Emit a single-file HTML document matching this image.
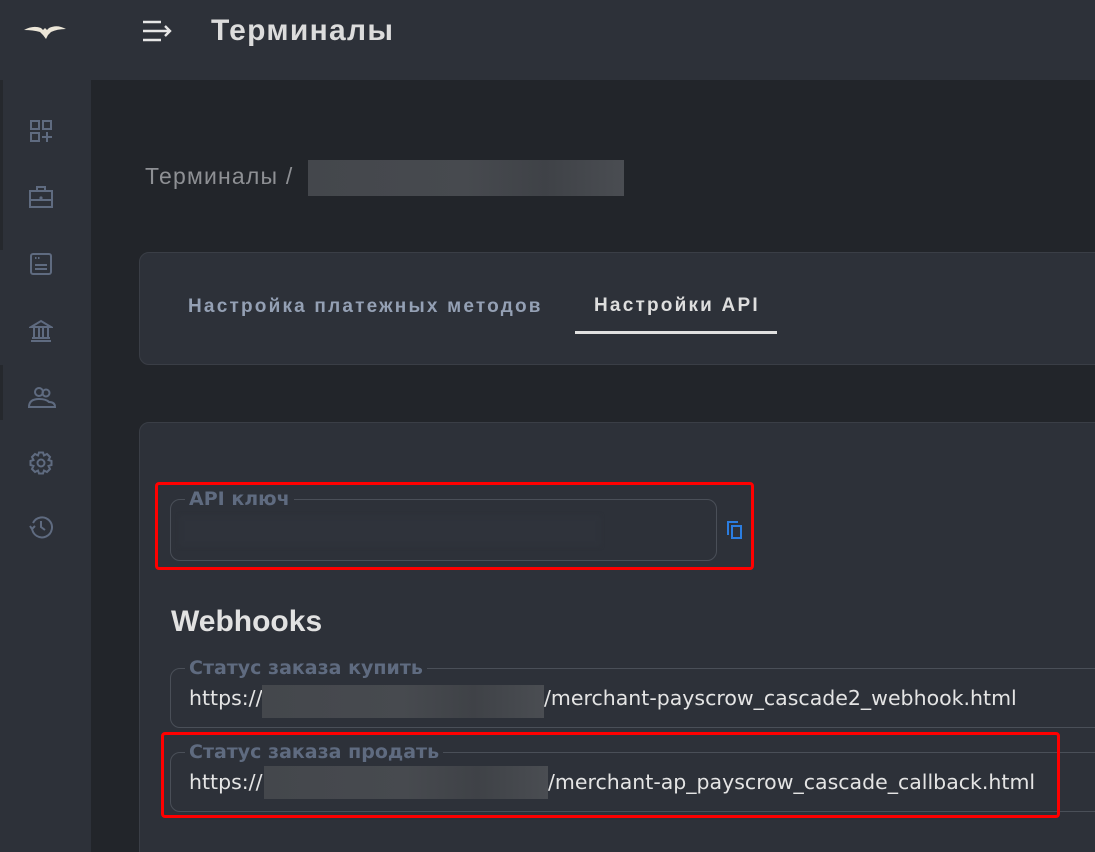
<!DOCTYPE html>
<html><head><meta charset="utf-8"><style>
*{box-sizing:border-box;margin:0;padding:0}
html,body{width:1095px;height:852px;overflow:hidden}
body{background:#22252a;font-family:"Liberation Sans",sans-serif;position:relative}
.hdr{position:absolute;left:0;top:0;width:1095px;height:80px;background:#2d3139}
.sb{position:absolute;left:0;top:80px;width:91px;height:772px;background:#2d3139}
.ttl{position:absolute;left:211px;top:14px;font-size:30px;letter-spacing:1.3px;font-weight:bold;color:#dcdcdc}
.ic{position:absolute;left:29px;width:24px;height:24px}
.bc{position:absolute;left:145px;top:163px;font-size:23px;letter-spacing:1.2px;color:#8e9094}
.blur{position:absolute;background:linear-gradient(90deg,#44474c,#474a4f 50%,#3f4247 75%,#4a4d52)}
.card{position:absolute;left:139px;width:1000px;background:#2d3139;border:1px solid #3a3e46;border-radius:10px}
.tab{position:absolute;font-size:19px;letter-spacing:2.2px;font-weight:bold}
fieldset{position:absolute;border:1px solid #4a4f58;border-radius:10px;padding:0 14px}
legend{color:#5f6b80;font-size:19px;font-weight:bold;padding:0 4px;margin-left:0;line-height:16px;font-family:"DejaVu Sans",sans-serif}
.url{position:absolute;font-family:"DejaVu Sans",sans-serif;font-size:20.5px;color:#e4e4e4}
.red{position:absolute;border:3px solid #ff0000;border-radius:4px}
</style></head><body>
<div class="hdr"></div>
<svg style="position:absolute;left:23px;top:22px" width="44" height="18" viewBox="0 0 44 18"><path d="M1 8 Q10 3 18 6 L20 8 L22 6 L24 8 L26 6 Q34 2 43 7 Q34 7 28 10 L25 13 L23 17 L20 13 L17 10 Q10 8 1 8Z" fill="#ece6d8"/></svg>
<svg style="position:absolute;left:143px;top:20px" width="30" height="22" viewBox="0 0 30 22" fill="none" stroke="#e6e6e6" stroke-width="2.4"><path d="M0 2H18M0 11H27M0 20H18M22 6L27 11L22 16"/></svg>
<div class="ttl">Терминалы</div>
<div class="sb"></div>
<div style="position:absolute;left:0;top:80px;width:3px;height:170px;background:#25282d"></div>
<div style="position:absolute;left:0;top:365px;width:3px;height:55px;background:#25282d"></div>
<svg class="ic" style="top:119px" viewBox="0 0 24 24" fill="none" stroke="#5f6b80" stroke-width="2"><rect x="2" y="2" width="8" height="8"/><rect x="14" y="2" width="8" height="8"/><rect x="2" y="14" width="8" height="8"/><path d="M18 13V23M13 18H23"/></svg>
<svg class="ic" style="top:185px" viewBox="0 0 24 24" fill="none" stroke="#5f6b80" stroke-width="2"><rect x="1" y="6" width="22" height="16"/><path d="M8 6V2H16V6M1 15H23"/><circle cx="12" cy="13" r=".6" fill="#5f6b80"/></svg>
<svg class="ic" style="top:252px" viewBox="0 0 24 24" fill="none" stroke="#5f6b80" stroke-width="2"><rect x="2" y="2" width="20" height="20" rx="2"/><path d="M6 13H18M6 17H18"/><path d="M6 6H11" stroke-dasharray="1.5 1.5"/></svg>
<svg class="ic" style="top:319px" viewBox="0 0 24 24" fill="none" stroke="#5f6b80" stroke-width="2"><path d="M2 8L12 2L22 8Z M2 22H22M3 19H21M5 9V19M10 9V19M14 9V19M19 9V19"/></svg>
<svg class="ic" style="top:385px;left:28px;width:28px" viewBox="0 0 28 24" fill="none" stroke="#5f6b80" stroke-width="2"><circle cx="11" cy="7" r="4"/><circle cx="18" cy="8" r="3.5"/><path d="M1 22Q1 14 11 14Q18 14 21 17Q27 17 27 22Z"/></svg>
<svg class="ic" style="top:451px" viewBox="0 0 24 24" fill="none" stroke="#5f6b80" stroke-width="2"><circle cx="12" cy="12" r="3.5"/><path d="M10 1.5H14L15 4.5L18 3L21 6L19.5 9L22.5 10V14L19.5 15L21 18L18 21L15 19.5L14 22.5H10L9 19.5L6 21L3 18L4.5 15L1.5 14V10L4.5 9L3 6L6 3L9 4.5Z"/></svg>
<svg class="ic" style="top:515px" viewBox="0 0 24 24" fill="none" stroke="#5f6b80" stroke-width="2"><path d="M4 8A10 10 0 1 1 3 13M1 11L3 14L6 11M12 6V12L16 15"/></svg>
<div class="bc">Терминалы /</div>
<div class="blur" style="left:308px;top:160px;width:316px;height:36px"></div>
<div class="card" style="top:252px;height:113px"></div>
<div class="tab" style="left:188px;top:296px;color:#94a0b4">Настройка платежных методов</div>
<div class="tab" style="left:594px;top:295px;color:#dedede">Настройки API</div>
<div style="position:absolute;left:575px;top:331px;width:202px;height:3px;background:#e0e0e0"></div>
<div class="card" style="top:422px;height:440px"></div>
<fieldset style="left:170px;top:491px;width:547px;height:70px"><legend>API ключ</legend></fieldset>
<div style="position:absolute;left:180px;top:516px;width:420px;height:30px;background:#2f333b;filter:blur(2px)"></div>
<svg style="position:absolute;left:727px;top:521px" width="16" height="18" viewBox="0 0 16 18" fill="none" stroke="#2b7de0" stroke-width="2"><path d="M1 14V1H11"/><rect x="5" y="5" width="9" height="12"/></svg>
<div style="position:absolute;left:171px;top:605px;font-size:30px;font-weight:bold;color:#e2e2e2">Webhooks</div>
<fieldset style="left:170px;top:660px;width:960px;height:68px"><legend>Статус заказа купить</legend></fieldset>
<div class="url" style="left:189px;top:686px">https://</div>
<div class="blur" style="left:262px;top:685px;width:282px;height:33px"></div>
<div class="url" style="left:544px;top:686px">/merchant-payscrow_cascade2_webhook.html</div>
<fieldset style="left:170px;top:744px;width:960px;height:68px"><legend>Статус заказа продать</legend></fieldset>
<div class="url" style="left:189px;top:770px">https://</div>
<div class="blur" style="left:264px;top:766px;width:284px;height:33px"></div>
<div class="url" style="left:548px;top:770px">/merchant-ap_payscrow_cascade_callback.html</div>
<div class="red" style="left:155px;top:482px;width:599px;height:88px"></div>
<div class="red" style="left:161px;top:732px;width:899px;height:86px"></div>
</body></html>
